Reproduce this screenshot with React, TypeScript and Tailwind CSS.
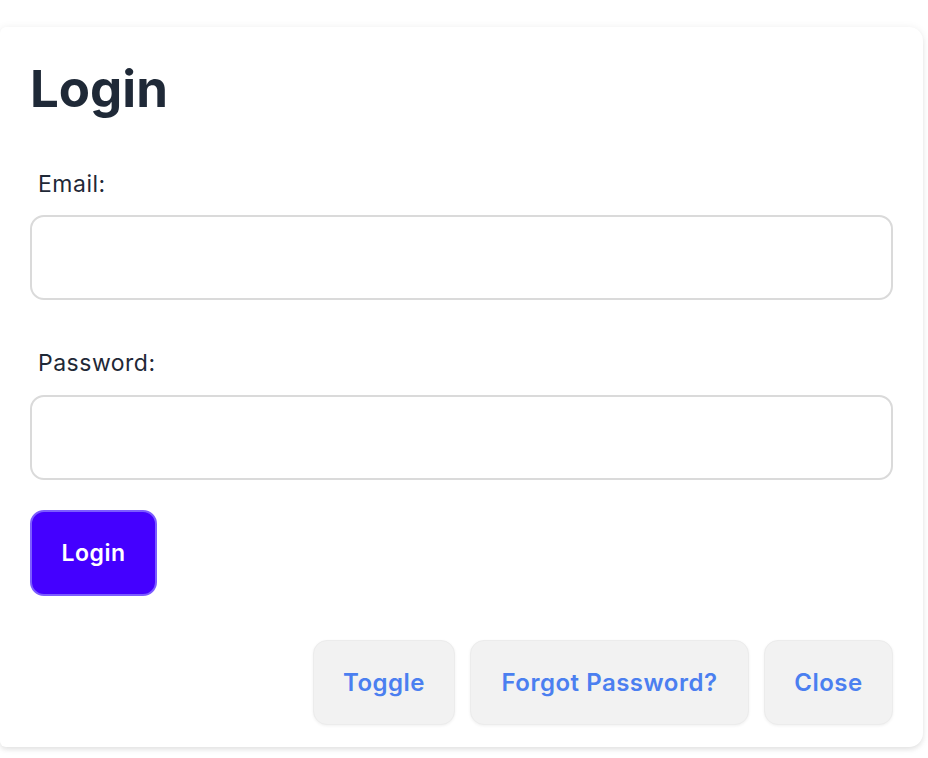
import { useState } from 'react';

export default function App() {
  const [email, setEmail] = useState('');
  const [password, setPassword] = useState('');

  return (
    <div className="min-h-[758px] bg-white pt-[27px] font-['Inter',sans-serif]">
      <div className="w-[923px] h-[720px] bg-white rounded-r-[14px] rounded-l-[6px] shadow-[0_1px_8px_rgba(0,0,0,0.08),0_3px_4px_rgba(0,0,0,0.06)] px-[30px] pt-[37px] flex flex-col">
        <h1 className="text-[51px] leading-[50px] font-bold text-[#1f2937] tracking-[0px]">Login</h1>

        <label className="mt-[56px] pl-2 text-[23px] leading-[28px] tracking-[0.5px] text-[#1f2937]">Email:</label>
        <input
          type="email"
          value={email}
          onChange={(e) => setEmail(e.target.value)}
          className="mt-[17px] w-[863px] h-[85px] rounded-[14px] border-2 border-[#dadada] px-4 text-[22px] outline-none"
        />

        <label className="mt-[49px] pl-2 text-[23px] leading-[28px] tracking-[0.5px] text-[#1f2937]">Password:</label>
        <input
          type="password"
          value={password}
          onChange={(e) => setPassword(e.target.value)}
          className="mt-[18px] w-[863px] h-[85px] rounded-[14px] border-2 border-[#dadada] px-4 text-[22px] outline-none"
        />

        <div>
          <button className="mt-[30px] w-[127px] h-[86px] rounded-[14px] bg-[#4400ff] border-2 border-[#7c5cff] text-white text-[23px] tracking-[0.5px] font-semibold">
            Login
          </button>
        </div>

        <div className="mt-[44px] flex justify-end gap-[15px] w-[863px]">
          <button className="w-[142px] h-[85px] rounded-[14px] bg-[#f2f2f2] border border-[#ececec] shadow-[0_1px_3px_rgba(0,0,0,0.06)] text-[24px] tracking-[0.5px] font-semibold text-[#4b7ff0]">
            Toggle
          </button>
          <button className="w-[279px] h-[85px] rounded-[14px] bg-[#f2f2f2] border border-[#ececec] shadow-[0_1px_3px_rgba(0,0,0,0.06)] text-[24px] tracking-[0.5px] font-semibold text-[#4b7ff0]">
            Forgot Password?
          </button>
          <button className="w-[129px] h-[85px] rounded-[14px] bg-[#f2f2f2] border border-[#ececec] shadow-[0_1px_3px_rgba(0,0,0,0.06)] text-[24px] tracking-[0.5px] font-semibold text-[#4b7ff0]">
            Close
          </button>
        </div>
      </div>
    </div>
  );
}
